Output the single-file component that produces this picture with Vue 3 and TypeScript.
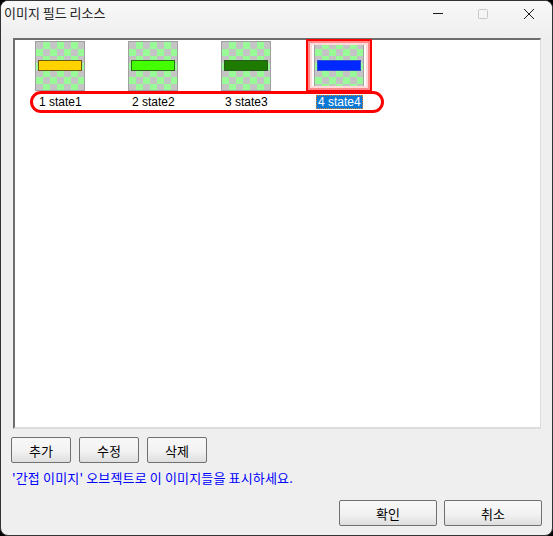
<template>
  <div class="dialog">
    <header class="title-bar">
      <span class="title">이미지 필드 리소스</span>
      <div class="win-controls">
        <svg class="win-btn" width="12" height="12" viewBox="0 0 12 12"><path d="M2 5.5H12" stroke="#1a1a1a" fill="none" /></svg>
        <svg class="win-btn" width="12" height="12" viewBox="0 0 12 12"><rect x="1.5" y="1.5" width="9" height="9" rx="1" stroke="#c8c8c8" fill="none" /></svg>
        <svg class="win-btn" width="12" height="12" viewBox="0 0 12 12"><path d="M1 1L11 11M11 1L1 11" stroke="#1a1a1a" fill="none" /></svg>
      </div>
    </header>

    <div class="list-box">
      <div class="items">
        <div v-for="item in items" :key="item.id" class="item" :class="{ selected: item.selected }">
          <div class="thumb">
            <div class="bar" :style="{ background: item.color, borderColor: item.edge }"></div>
          </div>
          <span class="label">{{ item.id }} {{ item.name }}</span>
        </div>
      </div>
      <div class="mark-row"></div>
      <div class="mark-item"></div>
    </div>

    <div class="actions">
      <button v-for="a in actions" :key="a" class="btn small">{{ a }}</button>
    </div>
    <p class="hint">'간접 이미지' 오브젝트로 이 이미지들을 표시하세요.</p>
    <div class="footer">
      <button class="btn large">확인</button>
      <button class="btn large">취소</button>
    </div>
  </div>
</template>

<script setup lang="ts">
interface ImageItem {
  id: number
  name: string
  color: string
  edge: string
  selected?: boolean
}

const items: ImageItem[] = [
  { id: 1, name: 'state1', color: '#ffd200', edge: '#6b5a10' },
  { id: 2, name: 'state2', color: '#44ff00', edge: '#2a6a18' },
  { id: 3, name: 'state3', color: '#1f7a00', edge: '#2a5a20' },
  { id: 4, name: 'state4', color: '#0028ff', edge: '#3050d0', selected: true }
]

const actions = ['추가', '수정', '삭제']
</script>

<style scoped>
.dialog {
  position: relative;
  box-sizing: border-box;
  width: 553px;
  height: 536px;
  display: flex;
  flex-direction: column;
  background: #efefef;
  border: 1px solid #333;
  border-radius: 8px;
  font-family: "Liberation Sans", "Noto Sans CJK KR", sans-serif;
  font-size: 12px;
  color: #000;
  overflow: hidden;
}

.title-bar {
  height: 36px;
  flex: none;
  display: flex;
  align-items: flex-start;
  justify-content: space-between;
  background: linear-gradient(#f8f8f8, #efefef);
}

.title {
  margin: 2px 0 0 3px;
  font-family: "Noto Sans CJK KR", sans-serif;
  font-size: 13px;
  line-height: 19px;
  color: #222;
}

.win-controls {
  display: flex;
  gap: 34px;
  margin: 7px 17px 0 0;
}

.win-btn {
  display: block;
}

.list-box {
  position: relative;
  box-sizing: border-box;
  height: 391px;
  margin: 1px 11px 0 12px;
  background: #fff;
  border-top: 2px solid #6e6e6e;
  border-left: 2px solid #6e6e6e;
  border-right: 1px solid #dcdcdc;
  border-bottom: 2px solid #dcdcdc;
}

.items {
  display: flex;
  padding: 1px 0 0 20px;
}

.item {
  width: 93px;
  flex: none;
  display: flex;
  flex-direction: column;
  align-items: flex-start;
}

.thumb {
  box-sizing: border-box;
  width: 50px;
  height: 50px;
  display: flex;
  align-items: center;
  justify-content: center;
  padding-bottom: 1px;
  border: 1px solid #a0a0a0;
  background: repeating-conic-gradient(#98fb98 0 25%, #c4c4c4 0 50%) 0 0 / 14px 14px;
}

.bar {
  box-sizing: border-box;
  width: 44px;
  height: 11px;
  border: 1px solid #444;
}

.label {
  align-self: flex-start;
  margin: 4px 0 0 3px;
  padding: 0 1px;
  line-height: 14px;
  white-space: nowrap;
}

.selected .label {
  margin-left: 2px;
  padding: 0 2px;
  background: #0a78d4;
  color: #fff;
  outline: 1px dotted #e08020;
  outline-offset: -1px;
}

.mark-row {
  position: absolute;
  left: 15px;
  top: 51px;
  width: 354px;
  height: 22px;
  box-sizing: border-box;
  border: 3px solid #f00;
  border-radius: 11px;
}

.mark-item {
  position: absolute;
  left: 291px;
  top: -1px;
  width: 66px;
  height: 53px;
  box-sizing: border-box;
  border: 2px solid #f00;
  box-shadow: inset 0 0 0 2px #ff8a8a, inset 0 0 0 4px #ffd8d8;
}

.actions {
  display: flex;
  gap: 8px;
  margin: 8px 0 0 10px;
}

.btn {
  box-sizing: border-box;
  height: 26px;
  padding: 0;
  border: 1px solid #707070;
  border-radius: 2px;
  background: linear-gradient(#f8f8f8 0%, #f2f2f2 55%, #dedede 100%);
  font-family: "Noto Sans CJK KR", sans-serif;
  font-size: 13px;
  color: #000;
}

.small {
  width: 60px;
}

.large {
  width: 98px;
}

.hint {
  margin: 6px 0 0 11px;
  font-family: "Noto Sans CJK KR", sans-serif;
  font-size: 13px;
  line-height: 17px;
  letter-spacing: 0.15px;
  color: #0000ff;
}

.footer {
  display: flex;
  gap: 7px;
  justify-content: flex-end;
  margin: 14px 10px 0 0;
}
</style>

<style>
html, body {
  background: #000;
}
</style>
